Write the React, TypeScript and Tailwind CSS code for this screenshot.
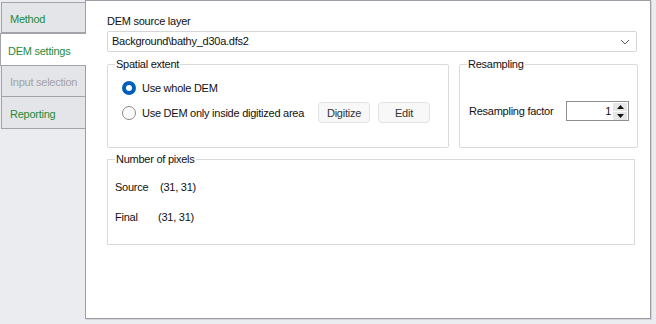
import React from "react";

const font = { fontFamily: '"Liberation Sans", Arial, sans-serif' };

type Tab = { label: string; state: "normal" | "active" | "disabled"; cls: string };

const tabs: Tab[] = [
  { label: "Method", state: "normal", cls: "mt-[2px] h-[31px] border-t border-b" },
  { label: "DEM settings", state: "active", cls: "h-[33px] border-b" },
  { label: "Input selection", state: "disabled", cls: "h-[31px] border-b" },
  { label: "Reporting", state: "normal", cls: "h-[32px] border-b" },
];

function Radio({ checked }: { checked: boolean }) {
  return checked ? (
    <span className="flex h-[14px] w-[14px] items-center justify-center rounded-full bg-[#005fb8]">
      <span className="h-[6px] w-[6px] rounded-full bg-white" />
    </span>
  ) : (
    <span className="h-[14px] w-[14px] rounded-full border border-[#8a8a8a] bg-[#fbfbfb]" />
  );
}

function Btn({ children }: { children: React.ReactNode }) {
  return (
    <div className="flex h-[21px] w-[52px] items-center justify-center rounded-[4px] border border-[#e3e3e3] bg-[#f8f8f8] text-[#333]">
      {children}
    </div>
  );
}

export default function App() {
  return (
    <div
      className="flex h-[324px] w-[656px] whitespace-nowrap bg-[#ebecef] text-[11px] tracking-[-0.25px] text-[#111]"
      style={font}
    >
      {/* tab strip */}
      <div className="flex w-[85px] flex-col pl-[1px]">
        {tabs.map((t) => (
          <div
            key={t.label}
            className={
              "flex items-center border-l border-[#a3a3ab] pt-[3px] " +
              t.cls +
              (t.state === "active"
                ? " relative z-10 -ml-px -mr-px border-t bg-white pl-[7px] text-[#1f8a3c]"
                : t.state === "disabled"
                ? " bg-[#e4e5e9] pl-[8px] text-[#a2a2a6]"
                : " bg-[#e4e5e9] pl-[8px] text-[#1f8a3c]")
            }
          >
            {t.label}
          </div>
        ))}
      </div>

      {/* main panel */}
      <div className="mb-[5px] mr-[5px] flex-1 border border-[#9d9da5] bg-white pl-[21px] pt-[13px] shadow-[1px_1px_0_#d4d4d8]">
        <div className="leading-[14px]">DEM source layer</div>
        <div className="mt-[3px] flex h-[21px] w-[530px] items-center justify-between rounded-[2px] border border-[#d6d6d6] pl-[4px] pr-[6px]">
          <span>Background\bathy_d30a.dfs2</span>
          <svg width="10" height="6" viewBox="0 0 10 6">
            <path d="M1 1 L5 5 L9 1" fill="none" stroke="#606060" strokeWidth="1" />
          </svg>
        </div>

        <div className="mt-[5px] flex gap-[10px]">
          <fieldset className="h-[91px] w-[342px] rounded-[2px] border border-[#dadada]">
            <legend className="ml-[7px] px-[1px] leading-[14px]">Spatial extent</legend>
            <div className="pl-[14px]">
              <div className="mt-[10px] flex items-center gap-[6px] leading-[14px]">
                <Radio checked />
                <span>Use whole DEM</span>
              </div>
              <div className="mt-[7px] flex items-center leading-[14px]">
                <Radio checked={false} />
                <span className="ml-[6px] w-[162px]">Use DEM only inside digitized area</span>
                <div className="ml-[14px] flex gap-[8px]">
                  <Btn>Digitize</Btn>
                  <Btn>Edit</Btn>
                </div>
              </div>
            </div>
          </fieldset>

          <fieldset className="h-[91px] w-[179px] rounded-[2px] border border-[#dadada]">
            <legend className="ml-[7px] px-[1px] leading-[14px]">Resampling</legend>
            <div className="mt-[30px] flex items-center pl-[9px]">
              <span className="w-[97px]">Resampling factor</span>
              <div className="flex h-[20px] w-[63px] items-center border border-[#8e8e8e]">
                <span className="flex-1 pr-[2px] text-right">1</span>
                <div className="mr-[1px] flex flex-col gap-[1px]">
                  <div className="flex h-[8px] w-[14px] items-center justify-center bg-[#e6e6e6]">
                    <svg width="7" height="4" viewBox="0 0 7 4"><path d="M3.5 0 L7 4 L0 4 Z" fill="#111" /></svg>
                  </div>
                  <div className="flex h-[8px] w-[14px] items-center justify-center bg-[#e6e6e6]">
                    <svg width="7" height="4" viewBox="0 0 7 4"><path d="M0 0 L7 0 L3.5 4 Z" fill="#111" /></svg>
                  </div>
                </div>
              </div>
            </div>
          </fieldset>
        </div>

        <fieldset className="mt-[4px] h-[93px] w-[528px] border border-[#dadada]">
          <legend className="ml-[7px] px-[1px] leading-[14px]">Number of pixels</legend>
          <div className="pl-[7px]">
            <div className="mt-[14px] flex leading-[14px]">
              <span className="w-[45px]">Source</span>
              <span>(31, 31)</span>
            </div>
            <div className="mt-[16px] flex leading-[14px]">
              <span className="w-[43px]">Final</span>
              <span>(31, 31)</span>
            </div>
          </div>
        </fieldset>
      </div>
    </div>
  );
}
